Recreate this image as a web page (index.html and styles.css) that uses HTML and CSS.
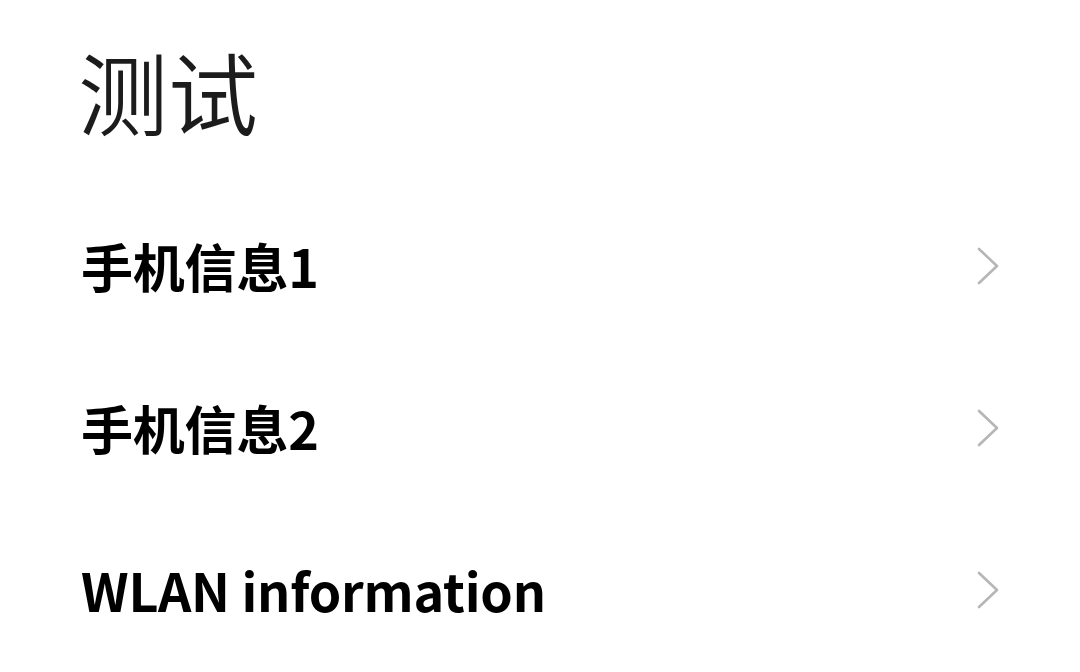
FILE: index.html
```html
<!DOCTYPE html>
<html lang="zh-CN">
<head>
<meta charset="utf-8">
<title>测试</title>
<link rel="stylesheet" href="styles.css">
</head>
<body>
<div class="page">
  <h1 class="title">测试</h1>
  <ul class="list">
    <li class="row">
      <span class="label">手机信息1</span>
      <svg class="chev" viewBox="0 0 24 40" width="24" height="40"><polyline points="3,3 21,20 3,37"/></svg>
    </li>
    <li class="row">
      <span class="label">手机信息2</span>
      <svg class="chev" viewBox="0 0 24 40" width="24" height="40"><polyline points="3,3 21,20 3,37"/></svg>
    </li>
    <li class="row">
      <span class="label">WLAN information</span>
      <svg class="chev" viewBox="0 0 24 40" width="24" height="40"><polyline points="3,3 21,20 3,37"/></svg>
    </li>
  </ul>
</div>
</body>
</html>
```

FILE: styles.css
```css
html, body {
  margin: 0;
  padding: 0;
  background: #ffffff;
}
body {
  font-family: "Noto Sans CJK SC", "Noto Sans", sans-serif;
  color: #000;
  width: 1080px;
  height: 672px;
  overflow: hidden;
}
.page {
  padding: 0 80px 0 78px;
}
.title {
  margin: 0;
  padding-top: 40px;
  height: 185px;
  box-sizing: border-box;
  font-size: 90px;
  font-weight: 350;
  line-height: 100px;
  color: #1c1c1c;
}
.list {
  list-style: none;
  margin: 0;
  padding: 0;
}
.row {
  display: flex;
  align-items: center;
  justify-content: space-between;
  height: 162px;
}
.label {
  font-size: 52px;
  font-weight: 700;
  line-height: 60px;
  padding-left: 3px;
  letter-spacing: -0.2px;
}
.chev {
  display: block;
  fill: none;
  stroke: #b6b6b6;
  stroke-width: 2.6;
  stroke-linecap: round;
  stroke-linejoin: round;
}
```
